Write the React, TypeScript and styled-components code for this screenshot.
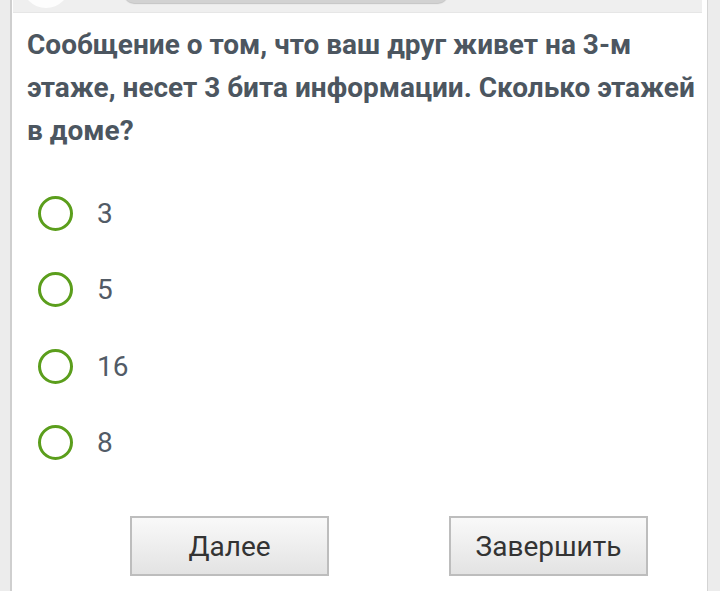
import styled, { createGlobalStyle } from "styled-components";

const GlobalStyle = createGlobalStyle`
  html, body {
    margin: 0;
    padding: 0;
    background: #ececec;
    font-family: Roboto, "Liberation Sans", sans-serif;
  }
`;

const answers = ["3", "5", "16", "8"];

const App = () => {
  return (
    <>
      <GlobalStyle />
      <Page>
        <Card>
          <Header>
            <Avatar />
            <Progress />
          </Header>
          <Body>
            <Question>
              Сообщение о том, что ваш друг живет на 3-м этаже, несет 3 бита
              информации. Сколько этажей в доме?
            </Question>
            <Options>
              {answers.map((a) => (
                <Option key={a}>
                  <Radio />
                  <Label>{a}</Label>
                </Option>
              ))}
            </Options>
            <Buttons>
              <Button>Далее</Button>
              <Button>Завершить</Button>
            </Buttons>
          </Body>
        </Card>
      </Page>
    </>
  );
};

export default App;

const Page = styled.div`
  height: 591px;
  padding-left: 10px;
  overflow: hidden;
`;

const Card = styled.div`
  width: 695px;
  height: 591px;
  background: #fff;
  border-left: 2px solid #cfcfcf;
  border-right: 1px solid #d4d4d4;
`;

const Header = styled.div`
  display: flex;
  align-items: flex-end;
  height: 12px;
  margin: 0 5px 0 1px;
  background: #efefef;
  border-bottom: 1px solid #e6e6e6;
  overflow: hidden;
`;

const Avatar = styled.div`
  flex: none;
  width: 48px;
  height: 48px;
  margin: 0 0 4px 9px;
  border-radius: 50%;
  background: #fdfdfd;
`;

const Progress = styled.div`
  flex: none;
  width: 324px;
  height: 30px;
  margin: 0 0 9px 54px;
  border-radius: 10px;
  background: #d2d2d2;
  box-shadow: 0 1px 1px #c4c4c4;
`;

const Body = styled.div`
  padding: 10px 4px 0 15px;
`;

const Question = styled.div`
  font-size: 28px;
  font-weight: 700;
  line-height: 43px;
  color: #4c5660;
`;

const Options = styled.div`
  margin-top: 23px;
`;

const Option = styled.div`
  display: flex;
  align-items: center;
  height: 76.5px;
`;

const Radio = styled.span`
  flex: none;
  box-sizing: border-box;
  width: 35px;
  height: 35px;
  margin-left: 11px;
  border: 3.5px solid #5b9e1c;
  border-radius: 50%;
`;

const Label = styled.span`
  margin-left: 24px;
  font-size: 28px;
  color: #525b66;
`;

const Buttons = styled.div`
  display: flex;
  gap: 120px;
  margin: 35px 0 0 103px;
`;

const Button = styled.button`
  box-sizing: border-box;
  width: 199px;
  height: 60px;
  border: 2px solid #bdbdbd;
  background: linear-gradient(#f9f9f9, #e3e3e3);
  font-family: Roboto, "Liberation Sans", sans-serif;
  font-size: 28px;
  color: #333;
  padding: 0;
`;
